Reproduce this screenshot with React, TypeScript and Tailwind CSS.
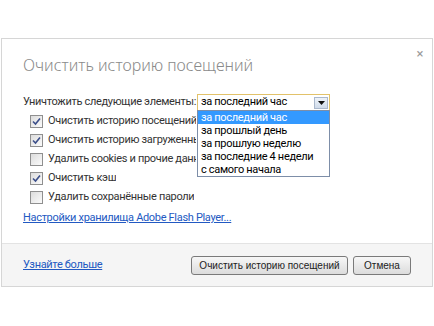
import { useState } from 'react';

const items = [
  { label: 'Очистить историю посещений', checked: true },
  { label: 'Очистить историю загруженных файлов', checked: true },
  { label: 'Удалить cookies и прочие данные сайтов и плагинов', checked: false },
  { label: 'Очистить кэш', checked: true },
  { label: 'Удалить сохранённые пароли', checked: false },
];

const periods = [
  'за последний час',
  'за прошлый день',
  'за прошлую неделю',
  'за последние 4 недели',
  'с самого начала',
];

function Check({ checked }: { checked: boolean }) {
  return (
    <span className="flex h-[13px] w-[13px] shrink-0 items-center justify-center border border-[#8f8f8f] bg-gradient-to-br from-[#dcdcdc] to-[#fbfbfb]">
      {checked && (
        <svg width="9" height="9" viewBox="0 0 9 9">
          <path d="M1 4.5 L3.5 7 L8 1.5" fill="none" stroke="#3c4f8a" strokeWidth="1.6" />
        </svg>
      )}
    </span>
  );
}

export default function App() {
  const [period, setPeriod] = useState(0);

  return (
    <div className="h-[326px] w-[434px] bg-white pl-px pt-[38px] font-['Roboto',sans-serif] tracking-[-0.02em]">
      <div className="flex h-[249px] w-[432px] flex-col border border-[#d6d6d6] bg-white">
        <div className="relative h-[204px] px-[21px]">
          <span className="absolute right-[9px] top-[8px] text-[13px] leading-none text-[#9a9a9a]">×</span>
          <h1 className="pt-[14px] font-['Noto_Sans',sans-serif] text-[16px] font-light leading-[24px] tracking-normal text-[#8a8a8a]">
            Очистить историю посещений
          </h1>

          <div className="relative mt-[17px] flex h-[17px] items-center text-[11px] text-[#333]">
            <span className="w-[174px] shrink-0 whitespace-nowrap">Уничтожить следующие элементы:</span>
            <div className="flex h-[17px] w-[133px] shrink-0 items-center justify-between border border-[#e2c26a] bg-white pl-[3px] pr-px">
              <span className="text-black">{periods[period]}</span>
              <span className="flex h-[12px] w-[14px] items-center justify-center border border-[#aab8cc] bg-gradient-to-b from-[#eef3f9] to-[#cfdbea]">
                <svg width="7" height="4" viewBox="0 0 7 4">
                  <path d="M0 0 H7 L3.5 4 Z" fill="#111" />
                </svg>
              </span>
            </div>
            <ul className="absolute left-[174px] top-[16px] z-10 w-[133px] border border-[#7d8ea8] bg-white">
              {periods.map((p, i) => (
                <li
                  key={p}
                  onClick={() => setPeriod(i)}
                  className={`h-[13px] whitespace-nowrap pl-[3px] leading-[13px] ${
                    i === period ? 'bg-[#3399ff] text-white' : 'text-black'
                  }`}
                >
                  {p}
                </li>
              ))}
            </ul>
          </div>

          <div className="mt-px flex flex-col pl-[7px]">
            {items.map((it) => (
              <label key={it.label} className="flex h-[19px] items-center gap-[5px] whitespace-nowrap text-[11px] text-[#333]">
                <Check checked={it.checked} />
                <span className="max-w-[148px] overflow-hidden">{it.label}</span>
              </label>
            ))}
          </div>

          <a className="mt-[3px] block text-[11px] text-[#2259c2] underline">
            Настройки хранилища Adobe Flash Player...
          </a>
        </div>

        <div className="flex flex-1 items-center justify-between border-t border-[#e3e3e3] bg-[#f5f5f5] pl-[21px] pr-[21px]">
          <a className="text-[11px] text-[#2259c2] underline">Узнайте больше</a>
          <div className="flex gap-[5px] tracking-normal">
            <button className="h-[19px] w-[157px] rounded-[3px] border border-[#7a7a7a] bg-gradient-to-b from-[#f7f7f7] to-[#dcdcdc] font-['Liberation_Sans',sans-serif] text-[10px] text-[#222]">
              Очистить историю посещений
            </button>
            <button className="h-[19px] w-[58px] rounded-[3px] border border-[#7a7a7a] bg-gradient-to-b from-[#f7f7f7] to-[#dcdcdc] font-['Liberation_Sans',sans-serif] text-[10px] text-[#222]">
              Отмена
            </button>
          </div>
        </div>
      </div>
    </div>
  );
}
